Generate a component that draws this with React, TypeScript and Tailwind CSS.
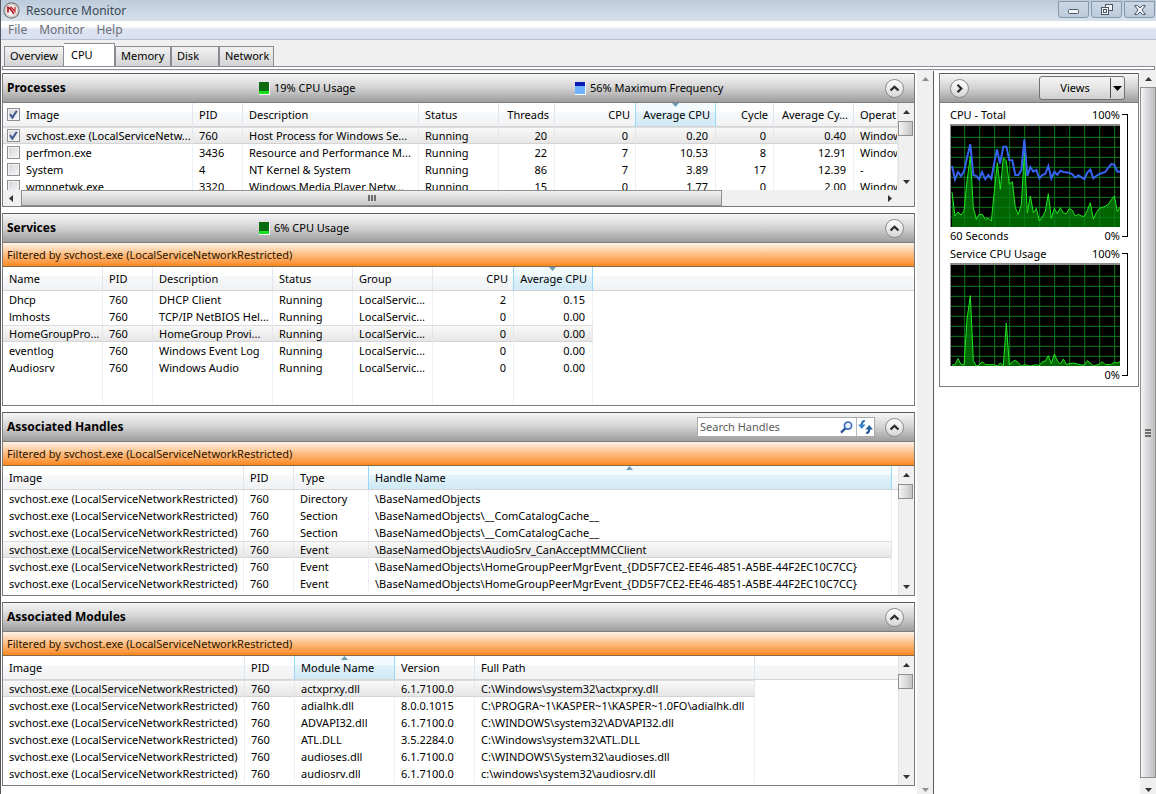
import { useState } from "react";
import { clsx } from "clsx";

interface Column {
  label: string;
  width?: string;
  align?: "right";
  sorted?: "up" | "down";
}

interface DataTableProps {
  label: string;
  columns: Column[];
  rows: string[][];
  selected: number;
  checkable?: boolean;
  filler?: string;
  children?: React.ReactNode;
}

const processColumns: Column[] = [
  { label: "Image", width: "w-[190px]" },
  { label: "PID", width: "w-[50px]" },
  { label: "Description", width: "w-[176px]" },
  { label: "Status", width: "w-[80px]" },
  { label: "Threads", width: "w-[56px]", align: "right" },
  { label: "CPU", width: "w-[81px]", align: "right" },
  { label: "Average CPU", width: "w-[80px]", align: "right", sorted: "down" },
  { label: "Cycle", width: "w-[58px]", align: "right" },
  { label: "Average Cy...", width: "w-[80px]", align: "right" },
  { label: "Operat" },
];

const processRows = [
  ["svchost.exe (LocalServiceNetw...", "760", "Host Process for Windows Se...", "Running", "20", "0", "0.20", "0", "0.40", "Windows"],
  ["perfmon.exe", "3436", "Resource and Performance M...", "Running", "22", "7", "10.53", "8", "12.91", "Windows"],
  ["System", "4", "NT Kernel & System", "Running", "86", "7", "3.89", "17", "12.39", "-"],
  ["wmpnetwk.exe", "3320", "Windows Media Player Netw...", "Running", "15", "0", "1.77", "0", "2.00", "Windows"],
];

const serviceColumns: Column[] = [
  { label: "Name", width: "w-[100px]" },
  { label: "PID", width: "w-[50px]" },
  { label: "Description", width: "w-[120px]" },
  { label: "Status", width: "w-[80px]" },
  { label: "Group", width: "w-[80px]" },
  { label: "CPU", width: "w-[81px]", align: "right" },
  { label: "Average CPU", width: "w-[79px]", align: "right", sorted: "down" },
];

const serviceRows = [
  ["Dhcp", "760", "DHCP Client", "Running", "LocalServic...", "2", "0.15"],
  ["lmhosts", "760", "TCP/IP NetBIOS Hel...", "Running", "LocalServic...", "0", "0.00"],
  ["HomeGroupPro...", "760", "HomeGroup Provi...", "Running", "LocalServic...", "0", "0.00"],
  ["eventlog", "760", "Windows Event Log", "Running", "LocalServic...", "0", "0.00"],
  ["Audiosrv", "760", "Windows Audio", "Running", "LocalServic...", "0", "0.00"],
];

const handleColumns: Column[] = [
  { label: "Image", width: "w-[241px]" },
  { label: "PID", width: "w-[50px]" },
  { label: "Type", width: "w-[75px]" },
  { label: "Handle Name", sorted: "up" },
];

const svchost = "svchost.exe (LocalServiceNetworkRestricted)";

const handleRows = [
  [svchost, "760", "Directory", "\\BaseNamedObjects"],
  [svchost, "760", "Section", "\\BaseNamedObjects\\__ComCatalogCache__"],
  [svchost, "760", "Section", "\\BaseNamedObjects\\__ComCatalogCache__"],
  [svchost, "760", "Event", "\\BaseNamedObjects\\AudioSrv_CanAcceptMMCClient"],
  [svchost, "760", "Event", "\\BaseNamedObjects\\HomeGroupPeerMgrEvent_{DD5F7CE2-EE46-4851-A5BE-44F2EC10C7CC}"],
  [svchost, "760", "Event", "\\BaseNamedObjects\\HomeGroupPeerMgrEvent_{DD5F7CE2-EE46-4851-A5BE-44F2EC10C7CC}"],
];

const moduleColumns: Column[] = [
  { label: "Image", width: "w-[242px]" },
  { label: "PID", width: "w-[50px]" },
  { label: "Module Name", width: "w-[100px]", sorted: "up" },
  { label: "Version", width: "w-[80px]" },
  { label: "Full Path", width: "w-[280px]" },
];

const moduleRows = [
  [svchost, "760", "actxprxy.dll", "6.1.7100.0", "C:\\Windows\\system32\\actxprxy.dll"],
  [svchost, "760", "adialhk.dll", "8.0.0.1015", "C:\\PROGRA~1\\KASPER~1\\KASPER~1.0FO\\adialhk.dll"],
  [svchost, "760", "ADVAPI32.dll", "6.1.7100.0", "C:\\WINDOWS\\system32\\ADVAPI32.dll"],
  [svchost, "760", "ATL.DLL", "3.5.2284.0", "C:\\Windows\\system32\\ATL.DLL"],
  [svchost, "760", "audioses.dll", "6.1.7100.0", "C:\\WINDOWS\\System32\\audioses.dll"],
  [svchost, "760", "audiosrv.dll", "6.1.7100.0", "c:\\windows\\system32\\audiosrv.dll"],
];

const tabs = [
  { label: "Overview", width: "w-[60px]" },
  { label: "CPU", width: "w-[51px]" },
  { label: "Memory", width: "w-[56px]" },
  { label: "Disk", width: "w-[48px]" },
  { label: "Network", width: "w-[55px]" },
];

const cpuUsage =
  "36,273 45,345 54,333 63,342 72,330 81,240 91,165 100,320 109,355 117,340 127,340 136,355 145,352 154,360 163,270 172,185 181,265 190,170 199,180 208,250 217,242 226,320 235,340 244,310 253,155 262,335 271,285 280,335 289,322 298,360 307,348 316,330 325,278 334,352 343,322 352,338 361,320 370,336 379,338 388,322 397,328 406,345 415,340 424,345 433,346 442,328 451,305 460,354 469,335 478,322 487,319 496,316 505,310 514,296 523,285 532,332 540,318";

const cpuFrequency =
  "36,195 45,235 54,213 63,225 72,212 81,170 91,130 100,222 109,225 117,235 126,213 136,235 145,222 154,233 163,185 171,145 180,188 190,137 199,137 208,177 217,178 226,222 235,222 244,208 253,115 262,225 271,198 280,212 289,207 298,232 307,222 316,218 325,195 334,232 343,212 352,222 361,209 370,213 388,215 397,220 406,230 415,223 433,234 442,215 451,206 460,232 469,225 478,219 496,213 505,200 514,189 523,191 532,212 540,212";

const serviceUsage =
  "36,375 45,374 54,356 63,373 72,375 81,237 91,167 100,362 109,378 118,374 127,365 136,374 160,374 172,378 181,369 190,377 199,250 208,375 217,365 226,361 235,368 244,378 253,374 271,378 290,374 298,377 307,365 316,363 325,347 334,371 343,342 352,363 361,372 370,357 379,373 400,369 424,375 433,375 442,362 460,377 478,373 487,365 496,374 514,373 523,367 532,369 540,365";

function Triangle({ direction, className }: { direction: "up" | "down" | "left" | "right"; className?: string }) {
  const points = {
    up: "0,4 3.5,0 7,4",
    down: "0,0 7,0 3.5,4",
    left: "4,0 4,7 0,3.5",
    right: "0,0 4,3.5 0,7",
  }[direction];
  const vertical = direction === "up" || direction === "down";

  return (
    <svg
      width={vertical ? 7 : 4}
      height={vertical ? 4 : 7}
      className={clsx("fill-current", className)}
      aria-hidden="true"
    >
      <polygon points={points} />
    </svg>
  );
}

function ScrollButton({
  direction,
  disabled,
  align = "items-center",
}: {
  direction: "up" | "down" | "left" | "right";
  disabled?: boolean;
  align?: string;
}) {
  return (
    <button
      type="button"
      aria-label={`Scroll ${direction}`}
      disabled={disabled}
      className={clsx(
        "flex size-4 shrink-0 justify-center",
        align,
        disabled ? "text-[#8f8f8f]" : "text-[#333333]",
      )}
    >
      <Triangle direction={direction} />
    </button>
  );
}

function ListScrollbar() {
  return (
    <div className="flex w-4 shrink-0 flex-col border-l border-[#e3e3e3] bg-[#f0f0f0]">
      <div className="-ml-px pt-px">
        <ScrollButton direction="up" />
      </div>
      <div className="-ml-px mt-px h-[15px] w-[15px] border border-[#8f8f8f] bg-linear-to-r from-[#f4f4f4] to-[#c4c4c4]" />
      <div className="flex-1" />
      <div className="-ml-px">
        <ScrollButton direction="down" />
      </div>
    </div>
  );
}

function DataTable({ label, columns, rows, selected, checkable, filler, children }: DataTableProps) {
  const [checked, setChecked] = useState<boolean[]>(rows.map((_, i) => i === selected));

  return (
    <table aria-label={label} className="w-full table-fixed border-separate border-spacing-0 text-[11px] leading-4 whitespace-nowrap">
      <thead>
        <tr className="h-6">
          {columns.map((column) => (
            <th
              key={column.label}
              scope="col"
              className={clsx(
                "relative border-r border-b border-b-[#d5d5d5] pl-1.5 font-normal",
                column.width,
                column.align === "right" ? "pr-[5px] text-right" : "text-left",
                column.sorted
                  ? "border-r-[#96d9f9] border-b-[#96d9f9] bg-linear-to-b from-[#f3fbfe] from-40% via-[#e2f2fa] via-41% to-[#cfe9f5] shadow-[-1px_0_0_#96d9f9]"
                  : "border-r-[#e2e5ea] bg-linear-to-b from-white from-40% via-[#f7f8fa] via-41% to-[#f1f2f4]",
              )}
            >
              {column.sorted && (
                <Triangle direction={column.sorted} className="absolute top-0 left-1/2 -ml-1 text-[#6d9db8]" />
              )}
              {checkable && column.label === "Image" ? (
                <label className="flex items-center gap-1.5">
                  <CheckBox
                    checked={checked.some(Boolean)}
                    onChange={(value) => setChecked(rows.map(() => value))}
                  />
                  {column.label}
                </label>
              ) : (
                column.label
              )}
            </th>
          ))}
          {filler && (
            <td className={clsx("border-b border-[#d5d5d5] bg-linear-to-b from-white from-40% via-[#f7f8fa] via-41% to-[#f1f2f4]", filler)} />
          )}
        </tr>
      </thead>
      <tbody>
        {rows.map((row, rowIndex) => (
          <tr key={rowIndex} className="h-[17px]">
            {row.map((cell, i) => (
              <td
                key={i}
                className={clsx(
                  "overflow-hidden border-r py-0",
                  columns[i].align === "right" ? "pr-[7px] text-right" : "pl-1.5",
                  rowIndex === selected
                    ? "border-r-[#e6e6e6] bg-linear-to-b from-[#fafafa] to-[#e5e5e5] shadow-[inset_0_1px_0_#dcdcdc,inset_0_-1px_0_#d4d4d4]"
                    : "border-r-[#eaf0f7]",
                )}
              >
                {checkable && i === 0 ? (
                  <label className="flex items-center gap-1.5">
                    <CheckBox
                      checked={checked[rowIndex]}
                      onChange={(value) =>
                        setChecked(checked.map((c, n) => (n === rowIndex ? value : c)))
                      }
                    />
                    {cell}
                  </label>
                ) : (
                  cell
                )}
              </td>
            ))}
            {filler && <td />}
          </tr>
        ))}
        {children}
      </tbody>
    </table>
  );
}

function CheckBox({ checked, onChange }: { checked: boolean; onChange: (value: boolean) => void }) {
  return (
    <span className="relative -ml-0.5 flex size-[13px] shrink-0">
      <input
        type="checkbox"
        checked={checked}
        onChange={(e) => onChange(e.target.checked)}
        className="size-[13px] appearance-none border border-[#8e8f8f] bg-linear-to-br from-[#d0d3d8] to-[#f8f8f8] shadow-[inset_0_0_0_1px_#f4f4f4]"
      />
      {checked && (
        <svg viewBox="0 0 13 13" className="pointer-events-none absolute inset-0 size-[13px]" aria-hidden="true">
          <path d="M3 6.2 5.4 9.6 9.8 2.8" fill="none" stroke="#45598c" strokeWidth="2" />
        </svg>
      )}
    </span>
  );
}

function Stat({ color, children }: { color: "green" | "blue"; children: React.ReactNode }) {
  return (
    <div className="flex items-center gap-1 text-[11px]">
      {color === "green" ? (
        <span className="flex h-[13px] w-[11px] flex-col border-r border-b border-white bg-[#0b6b10]">
          <span className="mt-auto h-[3px] bg-[#17e01c]" />
        </span>
      ) : (
        <span className="flex h-[13px] w-[11px] flex-col border-r border-b border-white bg-[#0a18b4]">
          <span className="mt-auto h-2 bg-[#6fb1ff]" />
        </span>
      )}
      {children}
    </div>
  );
}

function CollapseButton({ label, right }: { label: string; right?: boolean }) {
  return (
    <button
      type="button"
      aria-label={label}
      className="flex size-[19px] items-center justify-center rounded-full border border-[#8a8a8a] bg-linear-to-b from-white to-[#d6d6d6]"
    >
      <svg width="9" height="9" viewBox="0 0 9 9" fill="none" stroke="#2b2b2b" strokeWidth="2.2" aria-hidden="true">
        <path d={right ? "M2.5 0.8 6.3 4.5 2.5 8.2" : "M0.6 6.5 4.5 2.7 8.4 6.5"} />
      </svg>
    </button>
  );
}

function Section({
  title,
  stats,
  tools,
  filtered,
  children,
}: {
  title: string;
  stats?: React.ReactNode;
  tools?: React.ReactNode;
  filtered?: boolean;
  children: React.ReactNode;
}) {
  return (
    <section className="border border-[#7b7b7b] border-t-[#5c5c5c] bg-white">
      <header className="flex h-[29px] items-center border-b border-[#7d7d7d] bg-linear-to-b from-[#f6f6f6] via-[#d2d2d2] to-[#9d9d9d] px-1">
        <h2 className="w-[252px] text-xs font-bold">{title}</h2>
        {stats}
        <div className="mr-1.5 ml-auto flex items-center gap-2.5">
          {tools}
          <CollapseButton label={`Collapse ${title}`} />
        </div>
      </header>
      {filtered && (
        <p className="h-6 border-b border-[#8a6a48] bg-linear-to-b from-[#fdf3ea] via-[#fdbd80] to-[#fb8810] px-1 text-[11px] leading-[23px] text-[#2b1600]">
          Filtered by {svchost}
        </p>
      )}
      {children}
    </section>
  );
}

function SearchHandles() {
  return (
    <div className="flex h-5 items-center border border-[#a9a9a9] bg-white">
      <input
        type="text"
        aria-label="Search Handles"
        placeholder="Search Handles"
        className="w-[142px] pl-0.5 text-[11px] outline-none placeholder:text-[#5a5a5a]"
      />
      <button type="button" aria-label="Search" className="flex h-full w-4 items-center">
        <svg width="13" height="13" viewBox="0 0 13 13" fill="none" aria-hidden="true">
          <circle cx="8" cy="4.6" r="3.6" stroke="#3f6fbe" strokeWidth="1.7" fill="#e9f2fc" />
          <path d="M5.3 7.4 1 11.6" stroke="#2c4f93" strokeWidth="2.2" />
        </svg>
      </button>
      <button type="button" aria-label="Refresh" className="flex h-full w-[18px] items-center justify-center border-l border-[#b9b9b9]">
        <svg width="15" height="14" viewBox="0 0 15 14" fill="none" aria-hidden="true">
          <path d="M6.8 1C4.6 1 3.8 2.4 3.8 5" stroke="#2c6fb5" strokeWidth="2.2" />
          <path d="M0 4.4h7.6L3.8 9z" fill="#3585c9" />
          <path d="M8.2 13c2.2 0 3-1.4 3-4" stroke="#1f5592" strokeWidth="2.2" />
          <path d="M7.4 9.6H15L11.2 5z" fill="#20619f" />
        </svg>
      </button>
    </div>
  );
}

function Chart({
  title,
  caption,
  usage,
  frequency,
}: {
  title: string;
  caption?: string;
  usage: string;
  frequency?: string;
}) {
  return (
    <div className="flex gap-0.5 text-[11px] leading-[18px]">
      <div className="flex-1">
        <div className="flex h-[18px] justify-between">
          <span>{title}</span>
          <span>100%</span>
        </div>
        <svg
          viewBox="33 75 507 303"
          preserveAspectRatio="none"
          className="block h-[103px] w-full border-t-2 border-l border-[#8b8b8b] bg-black"
          aria-hidden="true"
        >
          <polygon points={`36,378 ${usage} 540,378`} fill="#006400" />
          <g stroke="#0a7d1c" strokeWidth="3">
            {[74, 119, 164, 209, 254, 299, 344, 389, 434, 479, 524].map((x) => (
              <path key={x} d={`M${x} 75V378`} />
            ))}
            {[109, 139, 169, 199, 229, 259, 289, 319, 349].map((y) => (
              <path key={y} d={`M33 ${y}H540`} />
            ))}
          </g>
          <polyline points={usage} fill="none" stroke="#1ee81e" strokeWidth="3" />
          {frequency && <polyline points={frequency} fill="none" stroke="#3663f2" strokeWidth="6" />}
        </svg>
        <div className="flex h-[18px] justify-between">
          <span>{caption}</span>
          <span>0%</span>
        </div>
      </div>
      <div className="my-2 w-1.5 border-y border-r border-black" />
    </div>
  );
}

function TitleBar() {
  const windowButton =
    "flex h-[17px] w-[31px] items-center justify-center rounded-b-[3px] border border-[#8797ac] bg-linear-to-b from-[#cbd7e4] to-[#bccbdc]";

  return (
    <div className="flex h-[21px] items-center bg-linear-to-b from-[#bccbdb] to-[#d6e1eb] pl-0.5">
      <svg width="17" height="17" viewBox="0 0 17 17" fill="none" aria-hidden="true">
        <circle cx="8.5" cy="8.5" r="7.6" fill="#f6f4f2" stroke="#77777a" strokeWidth="1.2" />
        <circle cx="8.5" cy="8.5" r="6" stroke="#c9bdb9" strokeWidth="1" />
        <path d="M5 10.5V5.5l2 1 4 5.5" stroke="#b3202c" strokeWidth="1.8" />
        <path d="M7.5 4.5 12 9.5V5" stroke="#c8323c" strokeWidth="1.4" />
      </svg>
      <h1 className="ml-1.5 text-xs leading-4 text-[#3c4754]">Resource Monitor</h1>
      <div className="ml-auto flex gap-0.5 self-start pt-px pr-px">
        <button type="button" aria-label="Minimize" className={windowButton}>
          <svg width="11" height="11" viewBox="0 0 11 11" aria-hidden="true">
            <rect x="0.5" y="5.5" width="10" height="4" rx="1" fill="#f2f5f8" stroke="#4d5866" />
          </svg>
        </button>
        <button type="button" aria-label="Restore" className={windowButton}>
          <svg width="12" height="11" viewBox="0 0 12 11" fill="#f2f5f8" stroke="#4d5866" aria-hidden="true">
            <rect x="4.5" y="0.5" width="7" height="6" />
            <rect x="0.5" y="3.5" width="7" height="7" />
            <rect x="2.5" y="5.5" width="3" height="3" />
          </svg>
        </button>
        <button type="button" aria-label="Close" className={windowButton}>
          <svg width="12" height="10" viewBox="0 0 12 10" aria-hidden="true">
            <path
              d="M0.6 0.6h3L6 3l2.4-2.4h3L8 5l3.4 4.4h-3L6 7 3.6 9.4h-3L4 5z"
              fill="#f2f5f8"
              stroke="#4d5866"
            />
          </svg>
        </button>
      </div>
    </div>
  );
}

export default function App() {
  const [activeTab, setActiveTab] = useState("CPU");

  return (
    <div className="flex min-h-screen flex-col border-l border-[#55565e] bg-white font-['Noto_Sans',sans-serif] text-black">
      <TitleBar />

      <nav className="flex h-[19px] items-center gap-3 border-b border-[#b4bfd2] bg-linear-to-b from-white from-30% via-[#dfe4f2] via-45% to-[#d9dff0] pl-[7px] text-xs text-[#6b6f78]">
        <a href="#file">File</a>
        <a href="#monitor">Monitor</a>
        <a href="#help">Help</a>
      </nav>

      <div className="bg-[#f0f0f0] pt-[3px]">
        <div role="tablist" className="flex h-[23px] items-end pl-[3px]">
          {tabs.map((tab) => (
            <button
              key={tab.label}
              type="button"
              role="tab"
              aria-selected={activeTab === tab.label}
              onClick={() => setActiveTab(tab.label)}
              className={clsx(
                "border border-b-0 border-[#898c95] text-left text-[11px]",
                tab.width,
                activeTab === tab.label
                  ? "h-[23px] border-l-0 bg-white pl-[7px]"
                  : "h-5 bg-linear-to-b from-[#f2f2f2] to-[#d3d3d3] pl-[5px]",
              )}
            >
              {tab.label}
            </button>
          ))}
        </div>
        <div className="mr-px ml-px h-[4px] border border-[#898c95] bg-white" />
      </div>

      <div className="flex flex-1 border-t border-[#f0f0f0]">
        <main className="flex min-w-0 flex-1 flex-col gap-1.5 py-[2px] pr-0.5 pl-px">
          <Section
            title="Processes"
            stats={
              <>
                <div className="w-[316px]">
                  <Stat color="green">19% CPU Usage</Stat>
                </div>
                <Stat color="blue">56% Maximum Frequency</Stat>
              </>
            }
          >
            <div className="flex h-[87px] overflow-hidden">
              <div className="min-w-0 flex-1 overflow-hidden">
                <DataTable label="Processes" columns={processColumns} rows={processRows} selected={0} checkable />
              </div>
              <ListScrollbar />
            </div>
            <div className="flex h-4 items-center bg-[#f0f0f0]">
              <div className="w-[18px]">
                <ScrollButton direction="left" />
              </div>
              <div className="flex h-4 w-[77%] items-center justify-center gap-px border border-[#8f8f8f] bg-linear-to-b from-[#f2f2f2] to-[#c6c6c6]">
                <span className="h-1.5 w-0.5 bg-[#6e6e6e]" />
                <span className="h-1.5 w-0.5 bg-[#6e6e6e]" />
                <span className="h-1.5 w-0.5 bg-[#6e6e6e]" />
              </div>
              <div className="mr-4 ml-auto">
                <ScrollButton direction="right" />
              </div>
            </div>
          </Section>

          <Section title="Services" stats={<Stat color="green">6% CPU Usage</Stat>} filtered>
            <DataTable label="Services" columns={serviceColumns} rows={serviceRows} selected={2} filler="w-auto">
              <tr className="h-[29px]">
                {serviceColumns.map((column) => (
                  <td key={column.label} className="border-r border-[#eaf0f7]" />
                ))}
                <td />
              </tr>
            </DataTable>
          </Section>

          <Section title="Associated Handles" tools={<SearchHandles />} filtered>
            <div className="flex">
              <div className="min-w-0 flex-1 pb-[3px]">
                <DataTable label="Associated Handles" columns={handleColumns} rows={handleRows} selected={3} filler="w-1.5" />
              </div>
              <ListScrollbar />
            </div>
          </Section>

          <Section title="Associated Modules" filtered>
            <div className="flex">
              <div className="min-w-0 flex-1 pb-[3px]">
                <DataTable label="Associated Modules" columns={moduleColumns} rows={moduleRows} selected={0} filler="w-auto" />
              </div>
              <ListScrollbar />
            </div>
          </Section>
        </main>

        <div className="flex w-4 shrink-0 flex-col justify-between bg-[#f0f0f0]">
          <ScrollButton direction="up" disabled />
          <ScrollButton direction="down" disabled align="items-end pb-0.5" />
        </div>

        <aside className="flex w-[223px] shrink-0 justify-between border-l border-[#5c5c5c] pl-[5px]">
          <div className="mt-0.5 w-[200px] self-start border border-[#7b7b7b] border-t-[#5c5c5c]">
            <div className="flex h-[29px] items-center justify-between border-b border-[#7d7d7d] bg-linear-to-b from-[#f6f6f6] via-[#d2d2d2] to-[#9d9d9d] pr-[13px] pl-2.5">
              <CollapseButton label="Hide charts" right />
              <button
                type="button"
                className="flex h-6 w-[86px] items-center rounded-[3px] border border-[#707070] bg-linear-to-b from-[#f4f4f4] via-[#e6e6e6] to-[#cfcfcf] text-[11px]"
              >
                <span className="flex-1 text-center">Views</span>
                <span className="flex h-5 w-[14px] items-center justify-center border-l border-[#4a4a4a]">
                  <svg width="9" height="5" aria-hidden="true">
                    <polygon points="0,0 9,0 4.5,5" />
                  </svg>
                </span>
              </button>
            </div>
            <div className="px-2.5 pt-[3px] pb-0.5">
              <Chart title="CPU - Total" caption="60 Seconds" usage={cpuUsage} frequency={cpuFrequency} />
              <Chart title="Service CPU Usage" usage={serviceUsage} />
            </div>
          </div>

          <div className="flex w-4 flex-col bg-[#f0f0f0]">
            <ScrollButton direction="up" />
            <div className="flex flex-1 flex-col items-center justify-center gap-px border border-[#8f8f8f] bg-linear-to-r from-[#f4f4f4] to-[#bdbdc2]">
              <span className="h-0.5 w-1.5 bg-[#6e6e6e]" />
              <span className="h-0.5 w-1.5 bg-[#6e6e6e]" />
              <span className="h-0.5 w-1.5 bg-[#6e6e6e]" />
            </div>
            <ScrollButton direction="down" align="items-end pb-0.5" />
          </div>
        </aside>
      </div>
    </div>
  );
}
